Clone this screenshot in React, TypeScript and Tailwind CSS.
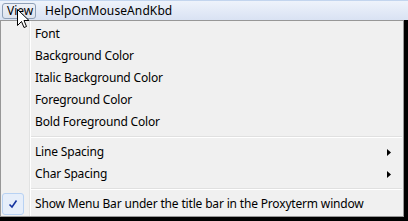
import React from "react";

const font = { fontFamily: '"Noto Sans", "Open Sans", sans-serif' };

function Item({ label, arrow }: { label: string; arrow?: boolean }) {
  return (
    <div className="flex h-[22px] items-center">
      <div className="w-[34px] shrink-0" />
      <span className="flex-1 text-[12px] leading-[22px] tracking-[-0.17px] text-black">{label}</span>
      {arrow && (
        <svg width="4" height="7" viewBox="0 0 4 7" className="mr-[12px]">
          <path d="M0 0 L4 3.5 L0 7 Z" fill="#000" />
        </svg>
      )}
    </div>
  );
}

function Sep() {
  return (
    <div className="flex h-[8px] items-center">
      <div className="w-[30px] shrink-0" />
      <div className="mr-[1px] flex-1 border-t border-t-[#e0e0e0] border-b border-b-white" />
    </div>
  );
}

export default function App() {
  return (
    <div className="relative h-[221px] w-[408px] overflow-hidden bg-black" style={font}>
      {/* menu bar */}
      <div className="flex h-[20px] items-center border-t border-t-[#c3d5ee] bg-gradient-to-b from-[#eef3fb] to-[#d9e2f3]">
        <div className="ml-[2px] flex h-[16px] w-[34px] items-center rounded-[3px] border border-[#8e9fb7] bg-gradient-to-b from-[#eef1f7] to-[#dde3ee] pl-[4px] text-[12px] text-black">
          View
        </div>
        <span className="ml-[9px] text-[12px] tracking-[0.1px] text-black">HelpOnMouseAndKbd</span>
      </div>
      {/* popup menu */}
      <div className="relative w-[404px] border border-[#979797] bg-[#f0f0f0] pb-[1px] pt-[2px]">
        <div className="absolute bottom-0 left-[28px] top-0 w-[2px] border-l border-l-[#e2e3e3] border-r border-r-white" />
        <div className="relative">
          <Item label="Font" />
          <Item label="Background Color" />
          <Item label="Italic Background Color" />
          <Item label="Foreground Color" />
          <Item label="Bold Foreground Color" />
          <Sep />
          <Item label="Line Spacing" arrow />
          <Item label="Char Spacing" arrow />
          <Sep />
          <div className="relative">
            <div className="absolute left-[1px] top-0 flex h-[22px] w-[22px] items-center justify-center rounded-[3px] border border-[#b8d2f3] bg-[#e6eefa]">
              <svg width="10" height="10" viewBox="0 0 10 10">
                <path d="M1.5 5.5 L4 8 L8.5 1.5" stroke="#1533a0" strokeWidth="1.6" fill="none" />
              </svg>
            </div>
            <Item label="Show Menu Bar under the title bar in the Proxyterm window" />
          </div>
        </div>
      </div>
      {/* mouse cursor */}
      <svg className="absolute left-[17px] top-[9px]" width="13" height="21" viewBox="0 0 13 21">
        <path d="M0.5 0.5 L0.5 16.5 L4.5 12.5 L7 18.5 L9.5 17.5 L7 11.5 L12 11.5 Z" fill="#fff" stroke="#000" strokeWidth="1" />
      </svg>
    </div>
  );
}
